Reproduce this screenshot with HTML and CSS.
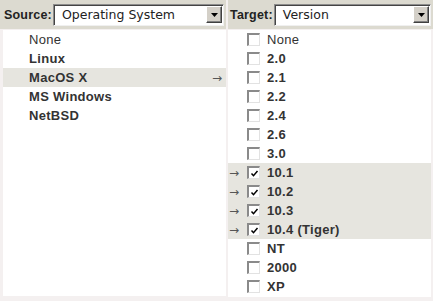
FILE: index.html
```html
<!DOCTYPE html>
<html lang="en">
<head>
    <meta charset="UTF-8">
    <title>Map Values</title>
    <link rel="stylesheet" href="styles.css">
</head>
<body>
    <div class="mapper">
        <div class="column source">
            <div class="header">
                <span class="label">Source:</span>
                <div class="combo">
                    <span class="combo-text">Operating System</span>
                    <span class="combo-btn"><svg width="7" height="4" viewBox="0 0 7 4"><path d="M0 0h7L3.5 4z" fill="#000"/></svg></span>
                </div>
            </div>
            <ul class="list">
                <li class="plain">None</li>
                <li>Linux</li>
                <li class="selected">MacOS X <span class="arrow">&rarr;</span></li>
                <li>MS Windows</li>
                <li>NetBSD</li>
            </ul>
        </div>
        <div class="column target">
            <div class="header">
                <span class="label">Target:</span>
                <div class="combo">
                    <span class="combo-text">Version</span>
                    <span class="combo-btn"><svg width="7" height="4" viewBox="0 0 7 4"><path d="M0 0h7L3.5 4z" fill="#000"/></svg></span>
                </div>
            </div>
            <ul class="list">
                <li class="plain"><span class="arrow"></span><span class="check"></span>None</li>
                <li><span class="arrow"></span><span class="check"></span>2.0</li>
                <li><span class="arrow"></span><span class="check"></span>2.1</li>
                <li><span class="arrow"></span><span class="check"></span>2.2</li>
                <li><span class="arrow"></span><span class="check"></span>2.4</li>
                <li><span class="arrow"></span><span class="check"></span>2.6</li>
                <li><span class="arrow"></span><span class="check"></span>3.0</li>
                <li class="selected"><span class="arrow">&rarr;</span><span class="check on"><svg width="9" height="9" viewBox="0 0 9 9"><path d="M1.5 4.5l2 2.2L7.5 2" fill="none" stroke="#000" stroke-width="1.5"/></svg></span>10.1</li>
                <li class="selected"><span class="arrow">&rarr;</span><span class="check on"><svg width="9" height="9" viewBox="0 0 9 9"><path d="M1.5 4.5l2 2.2L7.5 2" fill="none" stroke="#000" stroke-width="1.5"/></svg></span>10.2</li>
                <li class="selected"><span class="arrow">&rarr;</span><span class="check on"><svg width="9" height="9" viewBox="0 0 9 9"><path d="M1.5 4.5l2 2.2L7.5 2" fill="none" stroke="#000" stroke-width="1.5"/></svg></span>10.3</li>
                <li class="selected"><span class="arrow">&rarr;</span><span class="check on"><svg width="9" height="9" viewBox="0 0 9 9"><path d="M1.5 4.5l2 2.2L7.5 2" fill="none" stroke="#000" stroke-width="1.5"/></svg></span>10.4 (Tiger)</li>
                <li><span class="arrow"></span><span class="check"></span>NT</li>
                <li><span class="arrow"></span><span class="check"></span>2000</li>
                <li><span class="arrow"></span><span class="check"></span>XP</li>
            </ul>
        </div>
    </div>
</body>
</html>
```

FILE: styles.css
```css
body {
    margin: 0;
    background-color: #f4f0f0;
    font-family: "Liberation Sans", Arial, sans-serif;
    font-size: 13px;
    color: #333;
}

.mapper {
    display: grid;
    grid-template-columns: 226px 1fr;
    column-gap: 2px;
    height: 301px;
}

.header {
    display: flex;
    align-items: center;
    height: 29px;
    background-color: #dcdad0;
    padding: 0 2px 0 4px;
}

.target .header {
    padding-left: 2px;
}

.label {
    font-size: 12.5px;
    font-weight: bold;
    letter-spacing: 0.2px;
    color: #222;
    margin-right: 1px;
}

.combo {
    flex: 1;
    display: flex;
    align-items: center;
    height: 18px;
    padding: 1px 1px 1px 8px;
    background: white;
    border-top: 1px solid #8c8c8c;
    border-left: 1px solid #8c8c8c;
    border-right: 1px solid #f0f0f0;
    border-bottom: 1px solid #f0f0f0;
    box-shadow: inset 1px 1px 0 #444;
    font-family: "DejaVu Sans", sans-serif;
    font-size: 12.5px;
    color: #222;
}

.combo-text {
    flex: 1;
}

.combo-btn {
    display: flex;
    align-items: center;
    justify-content: center;
    width: 14px;
    height: 15px;
    background: #d4d0c8;
    border-top: 1px solid #fff;
    border-left: 1px solid #fff;
    border-right: 1px solid #404040;
    border-bottom: 1px solid #404040;
    box-shadow: inset -1px -1px 0 #808080;
}

.list {
    list-style: none;
    margin: 1px 0 0 3px;
    padding: 0;
    background: white;
    height: 266px;
}

.target .list {
    margin: 1px 2px 0 0;
    height: 267px;
}

.list li {
    display: flex;
    align-items: center;
    height: 19px;
    font-weight: bold;
    letter-spacing: 0.3px;
    padding-left: 26px;
}

.target .list li {
    padding-left: 0;
}

.list li.plain {
    font-weight: normal;
}

.list li.selected {
    background-color: #e6e5df;
}

.arrow {
    font-family: "DejaVu Sans", sans-serif;
    font-size: 12px;
    font-weight: normal;
    letter-spacing: 0;
    color: #555;
}

.source .arrow {
    margin-left: auto;
    margin-right: 4px;
}

.target .arrow {
    width: 18px;
    padding-left: 1px;
}

.check {
    display: flex;
    align-items: center;
    justify-content: center;
    box-sizing: border-box;
    width: 13px;
    height: 13px;
    margin-right: 7px;
    background: white;
    border-top: 2px solid #8a8a8a;
    border-left: 2px solid #8a8a8a;
    border-right: 1px solid #e2e2e2;
    border-bottom: 1px solid #e2e2e2;
}
```
